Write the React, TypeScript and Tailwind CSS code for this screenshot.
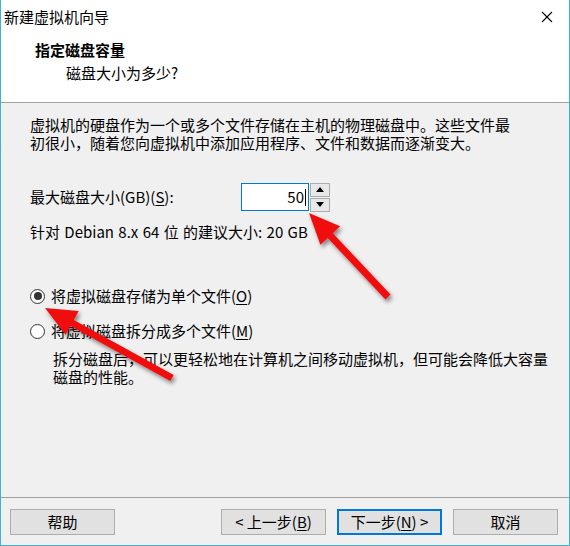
const font = { fontFamily: '"Noto Sans CJK SC", "Noto Sans", sans-serif' };

function arrowPoints(x1: number, y1: number, x2: number, y2: number, shaft = 7, headLen = 31, headW = 27) {
  const dx = x2 - x1;
  const dy = y2 - y1;
  const len = Math.hypot(dx, dy);
  const ux = dx / len;
  const uy = dy / len;
  const px = -uy;
  const py = ux;
  const bx = x2 - ux * headLen;
  const by = y2 - uy * headLen;
  const pts = [
    [x1 + (px * shaft) / 2, y1 + (py * shaft) / 2],
    [bx + (px * shaft) / 2, by + (py * shaft) / 2],
    [bx + (px * headW) / 2, by + (py * headW) / 2],
    [x2, y2],
    [bx - (px * headW) / 2, by - (py * headW) / 2],
    [bx - (px * shaft) / 2, by - (py * shaft) / 2],
    [x1 - (px * shaft) / 2, y1 - (py * shaft) / 2],
  ];
  return pts.map((p) => p.map((v) => v.toFixed(1)).join(",")).join(" ");
}

function Button({ children, primary }: { children: React.ReactNode; primary?: boolean }) {
  return (
    <div
      className={
        "flex h-[26px] w-[105px] items-center justify-center bg-[#e1e1e1] text-[15px] leading-[18px] text-black " +
        (primary ? "border-2 border-[#0078d7]" : "border border-[#adadad]")
      }
    >
      {children}
    </div>
  );
}

function Radio({ checked, children }: { checked?: boolean; children: React.ReactNode }) {
  return (
    <div className="flex h-[18px] items-center">
      <span className="ml-[29px] flex h-[15px] w-[15px] items-center justify-center rounded-full border border-[#333] bg-white">
        {checked && <span className="h-[8px] w-[8px] rounded-full bg-[#333]" />}
      </span>
      <span className="ml-[6px]">{children}</span>
    </div>
  );
}

export default function App() {
  return (
    <div
      className="relative flex h-[546px] w-[570px] flex-col border-x border-b border-[#41b1d3] bg-[#f0f0f0] text-[15px] leading-[18px] text-black"
      style={font}
    >
      <div className="h-[103px] border-b border-[#a0a0a0] bg-white">
        <div className="flex h-[34px] items-center justify-between pl-[3px] pr-[16px]">
          <span>新建虚拟机向导</span>
          <svg width="12" height="12" viewBox="0 0 12 12">
            <path d="M1 1 L11 11 M11 1 L1 11" stroke="#000" strokeWidth="1.1" />
          </svg>
        </div>
        <div className="mt-[7px] pl-[34px] font-bold">指定磁盘容量</div>
        <div className="mt-[5px] pl-[65px]">磁盘大小为多少?</div>
      </div>

      <div className="flex-1 pl-[29px]">
        <p className="mt-[13px]">
          虚拟机的硬盘作为一个或多个文件存储在主机的物理磁盘中。这些文件最
          <br />
          初很小，随着您向虚拟机中添加应用程序、文件和数据而逐渐变大。
        </p>

        <div className="mt-[31px] flex h-[28px] items-center">
          <span className="w-[211px]">
            最大磁盘大小(GB)(<u className="underline-offset-2">S</u>):
          </span>
          <div className="flex h-[28px] w-[68px] items-center justify-end border border-[#0078d7] bg-white pr-[2px]">
            <span>50</span>
            <span className="ml-[1px] h-[17px] w-px bg-black" />
          </div>
          <div className="ml-[1px] flex h-[29px] w-[20px] flex-col gap-[1px]">
            <div className="flex flex-1 items-center justify-center border border-[#adadad] bg-[#e8e8e8]">
              <svg width="8" height="5" viewBox="0 0 8 5">
                <path d="M0 5 L4 0 L8 5 Z" fill="#000" />
              </svg>
            </div>
            <div className="flex flex-1 items-center justify-center border border-[#adadad] bg-[#e8e8e8]">
              <svg width="8" height="5" viewBox="0 0 8 5">
                <path d="M0 0 L8 0 L4 5 Z" fill="#000" />
              </svg>
            </div>
          </div>
        </div>

        <p className="mt-[12px] [word-spacing:1px]">针对 Debian 8.x 64 位 的建议大小: 20 GB</p>
      </div>

      <div className="absolute left-0 top-[287px] w-full">
        <Radio checked>
          将虚拟磁盘存储为单个文件(<u className="underline-offset-2">O</u>)
        </Radio>
        <div className="mt-[17px]">
          <Radio>
            将虚拟磁盘拆分成多个文件(<u className="underline-offset-2">M</u>)
          </Radio>
        </div>
        <p className="mt-[10px] pl-[52px]">
          拆分磁盘后，可以更轻松地在计算机之间移动虚拟机，但可能会降低大容量
          <br />
          磁盘的性能。
        </p>
      </div>

      <div className="flex h-[48px] items-start border-t border-[#a0a0a0] pl-[9px] pr-[11px] pt-[11px]">
        <Button>帮助</Button>
        <div className="ml-auto flex gap-[11px]">
          <Button>
            &lt; 上一步(<u className="underline-offset-2">B</u>)
          </Button>
          <Button primary>
            下一步(<u className="underline-offset-2">N</u>) &gt;
          </Button>
          <Button>取消</Button>
        </div>
      </div>

      <svg className="pointer-events-none absolute -left-px top-0" width="570" height="546">
        <defs>
          <filter id="sh" x="-20%" y="-20%" width="140%" height="140%">
            <feDropShadow dx="2" dy="3" stdDeviation="2" floodColor="#000" floodOpacity="0.45" />
          </filter>
        </defs>
        <polygon points={arrowPoints(388, 297, 309, 213)} fill="#f01010" strokeLinejoin="round" filter="url(#sh)" />
        <polygon points={arrowPoints(172, 378, 45, 308)} fill="#f01010" strokeLinejoin="round" filter="url(#sh)" />
      </svg>
    </div>
  );
}
